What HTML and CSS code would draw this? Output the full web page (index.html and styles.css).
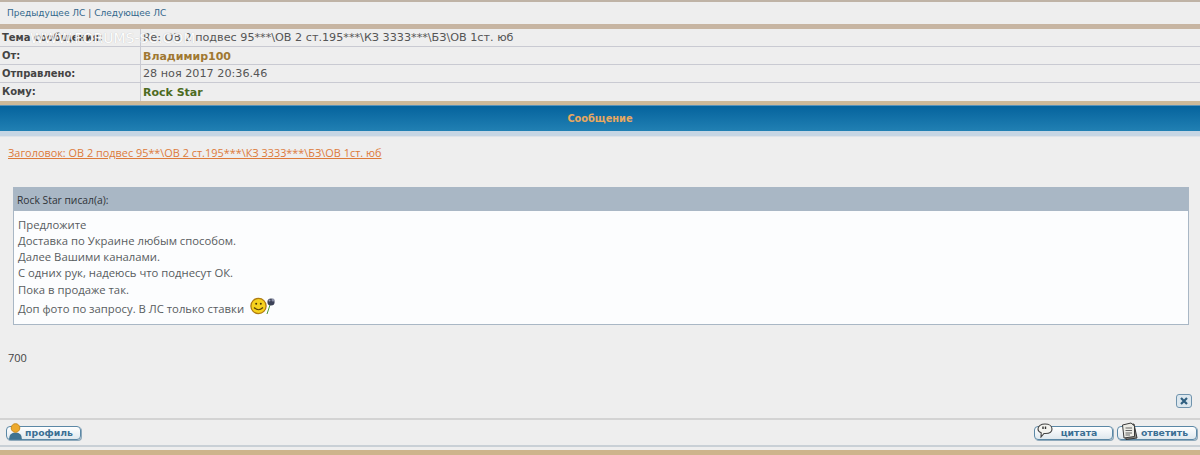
FILE: index.html
```html
<!DOCTYPE html>
<html lang="en">
<head>
    <meta charset="UTF-8">
    <meta name="viewport" content="width=device-width, initial-scale=1.0">
    <title>Сообщение</title>
    <link rel="stylesheet" href="styles.css">
</head>
<body>
    <div class="top-line"></div>
    <div class="pm-nav">
        <a href="#">Предыдущее ЛС</a> | <a href="#">Следующее ЛС</a>
    </div>
    <div class="tan-band"></div>

    <div class="info-table">
        <div class="info-row">
            <div class="info-label">Тема сообщения:</div>
            <div class="info-value">Re: ОВ 2 подвес 95***\ОВ 2 ст.195***\КЗ 3333***\БЗ\ОВ 1ст. юб</div>
            <span class="watermark">WWW.FORUMS-SC.COM</span>
        </div>
        <div class="info-row">
            <div class="info-label">От:</div>
            <div class="info-value name-from">Владимир100</div>
        </div>
        <div class="info-row">
            <div class="info-label">Отправлено:</div>
            <div class="info-value">28 ноя 2017 20:36.46</div>
        </div>
        <div class="info-row last">
            <div class="info-label">Кому:</div>
            <div class="info-value name-to">Rock Star</div>
        </div>
    </div>
    <div class="tan-band small"></div>

    <div class="section-title">Сообщение</div>
    <div class="section-under"></div>

    <div class="post">
        <a class="post-head" href="#">Заголовок: ОВ 2 подвес 95**\ОВ 2 ст.195***\КЗ 3333***\БЗ\ОВ 1ст. юб</a>

        <div class="quote">
            <div class="quote-title">Rock Star писал(а):</div>
            <div class="quote-body">
                <p>Предложите</p>
                <p>Доставка по Украине любым способом.</p>
                <p>Далее Вашими каналами.</p>
                <p>С одних рук, надеюсь что поднесут ОК.</p>
                <p class="line-five">Пока в продаже так.</p>
                <p class="with-smile">Доп фото по запросу. В ЛС только ставки
                    <svg class="smile" width="26" height="18" viewBox="0 0 26 18">
                        <path d="M17 17 L20 8" stroke="#4a9a3a" stroke-width="1" fill="none"/>
                        <circle cx="21" cy="5" r="3.6" fill="#3c4258"/>
                        <circle cx="23" cy="3" r="1.5" fill="#8c90a8"/>
                        <circle cx="19.500" cy="3.500" r="1" fill="#9a9eb4"/>
                        <circle cx="8.500" cy="9" r="7.600" fill="#f6d21e" stroke="#b07c10" stroke-width="1.300"/>
                        <circle cx="6.200" cy="6.800" r="1" fill="#4a3608"/>
                        <circle cx="10.800" cy="6.800" r="1" fill="#4a3608"/>
                        <path d="M4 10.500 Q8.500 15 13 10.500" stroke="#5a4208" stroke-width="1.100" fill="none"/>
                    </svg>
                </p>
            </div>
        </div>

        <div class="post-text">700</div>

        <div class="close-row">
            <a class="close-btn" href="#">
                <svg width="10" height="10" viewBox="0 0 10 10"><path d="M2 2 L8 8 M8 2 L2 8" stroke="#2f5f80" stroke-width="2.200"/></svg>
            </a>
        </div>
    </div>

    <div class="actions">
        <a class="btn btn-profile" href="#">
            <svg class="btn-icon icon-user" width="15" height="17" viewBox="0 0 15 17">
                <path d="M1 16.500 Q1 9.500 7.500 9.500 Q14 9.500 14 16.500 Z" fill="#3f7391"/>
                <circle cx="7.500" cy="5" r="4.300" fill="#eda92c" stroke="#c98a1c" stroke-width="1"/>
            </svg>
            профиль
        </a>
        <div class="actions-right">
            <a class="btn btn-quote" href="#">
                <svg class="btn-icon icon-quote" width="16" height="15" viewBox="0 0 16 15">
                    <path d="M8 1 C12 1 15 3 15 6 C15 9 12 10.500 8.500 10.500 L7 10.500 L4 14 L4.200 9.800 C2 9 1 7.800 1 6 C1 3 4 1 8 1 Z" fill="#f4f4f0" stroke="#444" stroke-width="1.100"/>
                    <path d="M6 3.500 V6 M8.500 3.500 V6" stroke="#333" stroke-width="1.400"/>
                </svg>
                цитата
            </a>
            <a class="btn btn-reply" href="#">
                <svg class="btn-icon icon-reply" width="17" height="18" viewBox="0 0 17 18">
                    <path d="M3 4 L13 2 L16 16 L5 17.500 Z" fill="#8b8b86" stroke="#333" stroke-width="1"/>
                    <path d="M1.500 3 L10 1 L13.500 4 L13.500 14.500 L3 16 Z" fill="#ecece6" stroke="#3b3b3b" stroke-width="1"/>
                    <path d="M4.500 6 H11 M4.500 8.500 H11 M4.500 11 H11 M4.500 13 H9" stroke="#666" stroke-width="1"/>
                </svg>
                ответить
            </a>
        </div>
    </div>
    <div class="bottom-gap"></div>
    <div class="tan-band bottom"></div>
</body>
</html>
```

FILE: styles.css
```css
html, body {
    margin: 0;
    padding: 0;
}
body {
    height: 455px;
    overflow: hidden;
    background-color: #eeeeee;
    font-family: "Liberation Sans", Arial, sans-serif;
    font-size: 12px;
    color: #444;
    display: flex;
    flex-direction: column;
}
a { text-decoration: none; }

.top-line {
    height: 2px;
    background-color: #bfb3a6;
}
.pm-nav {
    height: 22px;
    padding-left: 7px;
    font-family: "DejaVu Sans", Verdana, sans-serif;
    font-size: 9px;
    line-height: 23px;
    color: #555;
    background-color: #eeeeee;
}
.pm-nav a { color: #33688c; }
.tan-band {
    height: 5px;
    flex: none;
    background-color: #c7b5a2;
}
.tan-band.small {
    height: 4px;
    background-color: #cdb999;
    border-bottom: 1px solid #5a93b8;
}
.tan-band.bottom {
    height: 5px;
    background-color: #cdb48c;
}

.info-row {
    position: relative;
    display: flex;
    height: 17px;
    border-bottom: 1px solid #c9cad2;
    line-height: 18px;
}
.info-row.last {
    height: 18px;
    border-bottom: none;
}
.info-label {
    width: 138px;
    padding-left: 2px;
    border-right: 1px solid #c9cad2;
    font-family: "DejaVu Sans", Verdana, sans-serif;
    font-size: 10px;
    font-weight: bold;
    color: #444;
}
.info-value {
    padding-left: 2px;
    font-family: "DejaVu Sans", Verdana, sans-serif;
    font-size: 11.2px;
    color: #555;
}
.name-from {
    font-size: 11px;
    line-height: 19px;
    font-weight: bold;
    color: #a07832;
}
.name-to {
    font-size: 11px;
    line-height: 19px;
    font-weight: bold;
    color: #4d6b1f;
}
.watermark {
    position: absolute;
    left: 30px;
    top: 0;
    font-family: "DejaVu Sans", Verdana, sans-serif;
    font-size: 14px;
    color: #ffffff;
    opacity: 0.9;
    text-shadow: 0 0 1px #b5b5b5;
    white-space: nowrap;
}

.section-title {
    flex: none;
    height: 25px;
    line-height: 26px;
    text-align: center;
    font-family: "DejaVu Sans", Verdana, sans-serif;
    font-size: 9.8px;
    font-weight: bold;
    color: #e8a860;
    background: linear-gradient(#05639d, #2180b3);
}
.section-under {
    flex: none;
    height: 5px;
    background-color: #c6d6e4;
    border-bottom: 1px solid #dfe3e8;
}

.post {
    flex: 1;
    padding: 8px 8px 0;
}
.post-head {
    font-family: "Open Sans", "Liberation Sans", sans-serif;
    font-size: 10.9px;
    line-height: 16px;
    color: #dd7a3a;
    text-decoration: underline;
    display: block;
}
.quote {
    margin: 26px 3px 0 5px;
    border: 1px solid #a9b7c5;
    background-color: #fcfdfe;
}
.quote-title {
    height: 23px;
    line-height: 24px;
    padding-left: 3px;
    font-family: "Open Sans", "Liberation Sans", sans-serif;
    font-size: 10.3px;
    color: #2f3338;
    background-color: #a9b7c5;
}
.quote-body {
    padding: 6px 4px 3px;
    font-family: "Open Sans", "Liberation Sans", sans-serif;
    font-size: 11.3px;
    color: #585c60;
}
.quote-body p {
    margin: 0;
    height: 16px;
    line-height: 16px;
}
.quote-body p.line-five {
    line-height: 18px;
}
.quote-body p.with-smile {
    height: 24px;
    line-height: 24px;
    display: flex;
    align-items: center;
    gap: 6px;
}
.smile { margin-top: -7px; }
.post-text {
    margin-top: 25px;
    font-family: "Open Sans", "Liberation Sans", sans-serif;
    font-size: 11px;
    color: #444;
}
.close-row {
    display: flex;
    justify-content: flex-end;
    margin-top: 29px;
}
.close-btn {
    width: 14px;
    height: 12px;
    display: flex;
    align-items: center;
    justify-content: center;
    border: 1px solid #6f93ad;
    border-radius: 3px;
    background-color: #dce7ee;
}

.actions {
    flex: none;
    height: 25px;
    display: flex;
    justify-content: space-between;
    align-items: center;
    padding: 0 3px 0 6px;
    border-top: 2px solid #d3d3d3;
    border-bottom: 2px solid #c9d0d6;
}
.actions-right {
    display: flex;
    gap: 4px;
}
.btn {
    position: relative;
    box-sizing: border-box;
    height: 14px;
    line-height: 11px;
    display: block;
    font-family: "DejaVu Sans", Verdana, sans-serif;
    font-size: 9.3px;
    font-weight: bold;
    color: #3b6f93;
    text-align: center;
    border: 1px solid #5b88a6;
    border-radius: 4px;
    background: linear-gradient(#ffffff, #dfe8ee);
    box-shadow: 1px 1px 0 #8fa9bb;
}
.btn-profile {
    width: 75px;
    padding-left: 11px;
}
.btn-quote {
    width: 79px;
    padding-left: 11px;
}
.btn-reply {
    width: 80px;
    padding-left: 15px;
}
.btn-icon {
    position: absolute;
    left: 1px;
    bottom: -1px;
}
.icon-quote { left: 2px; bottom: 1px; }
.icon-reply { left: 3px; bottom: -1px; }
.bottom-gap {
    flex: none;
    height: 3px;
}
```
